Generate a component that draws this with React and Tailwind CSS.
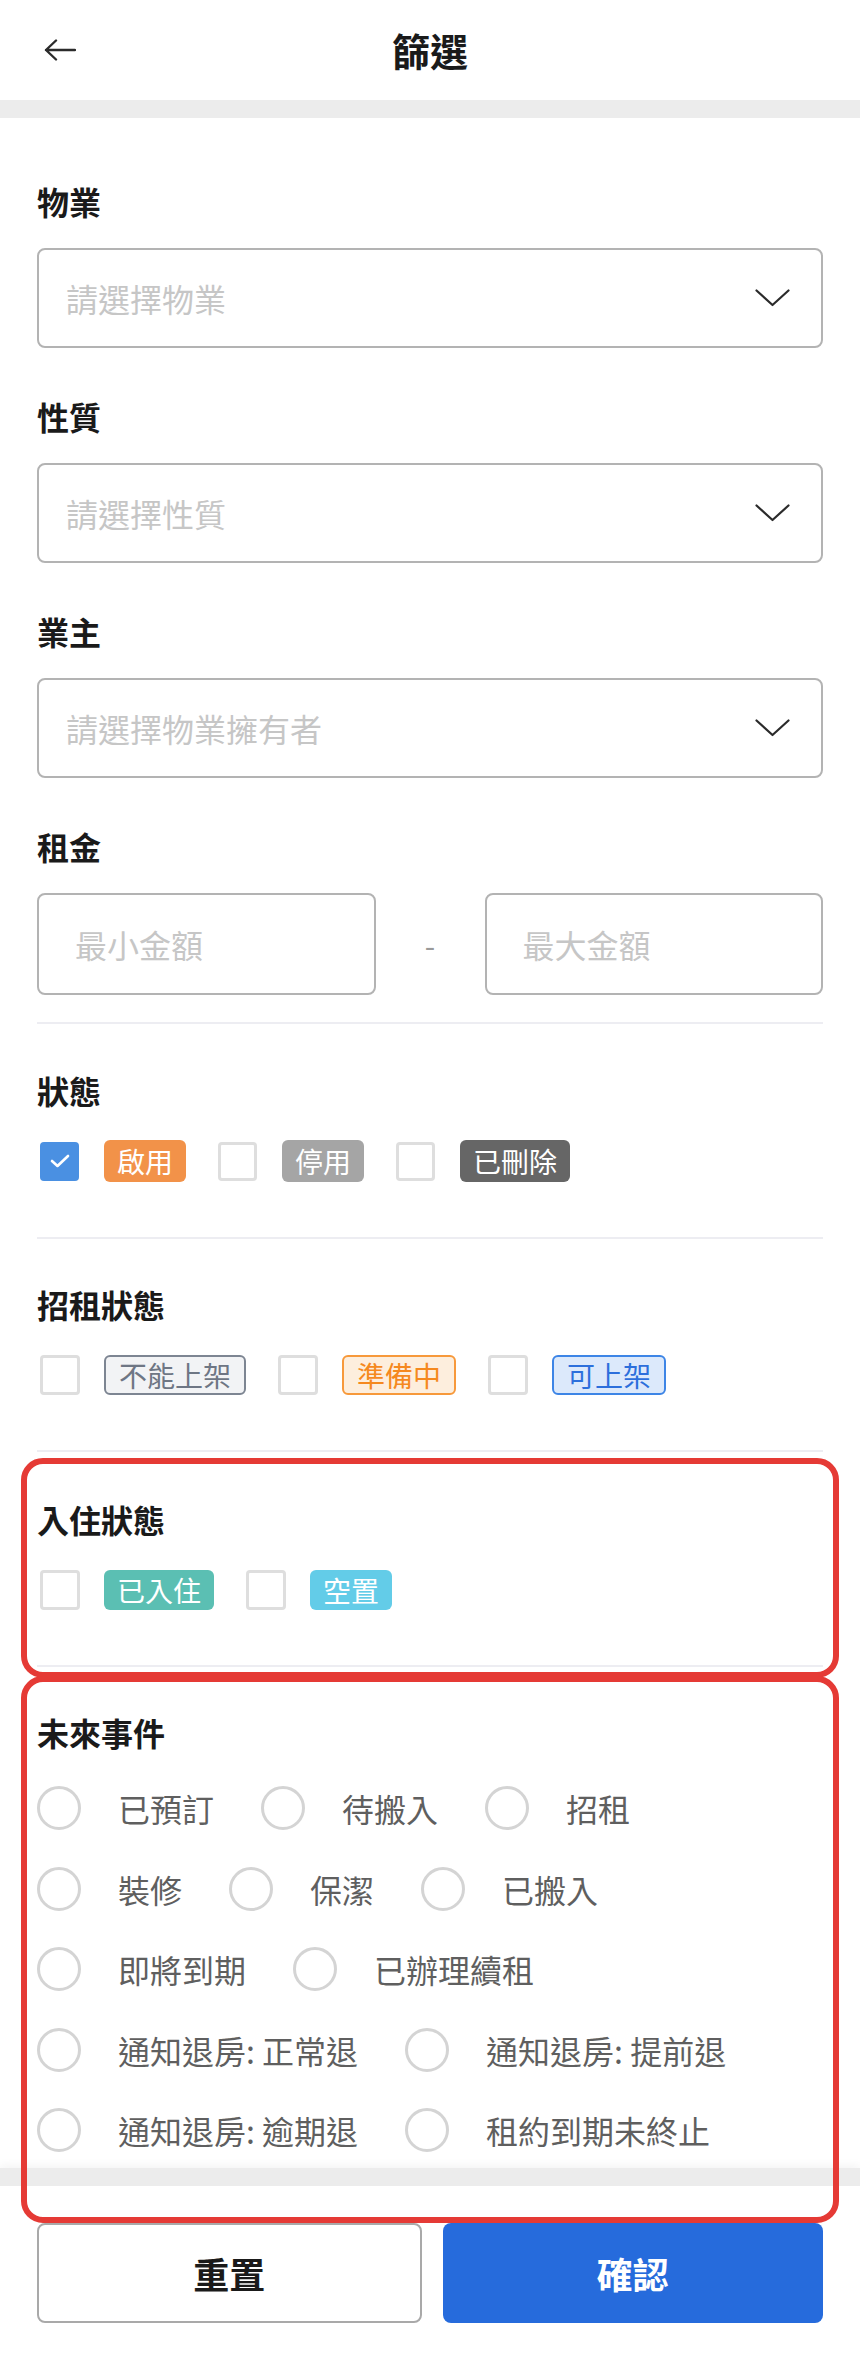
import React from "react";

const selects = [
  { label: "物業", placeholder: "請選擇物業" },
  { label: "性質", placeholder: "請選擇性質" },
  { label: "業主", placeholder: "請選擇物業擁有者" },
];

const events = [
  "已預訂",
  "待搬入",
  "招租",
  "裝修",
  "保潔",
  "已搬入",
  "即將到期",
  "已辦理續租",
  "通知退房: 正常退",
  "通知退房: 提前退",
  "通知退房: 逾期退",
  "租約到期未終止",
];

function Label({ children }) {
  return (
    <div className="text-[32px] leading-[45px] font-bold text-[#1a1a1a]">
      {children}
    </div>
  );
}

function Chevron() {
  return (
    <svg width="35" height="18" viewBox="0 0 35 18" fill="none">
      <path d="M1.5 1.5 L17.5 16 L33.5 1.5" stroke="#2b2b2b" strokeWidth="2.2" strokeLinecap="round" strokeLinejoin="round" />
    </svg>
  );
}

function SelectBox({ placeholder }) {
  return (
    <div className="mt-[24px] h-[100px] rounded-[8px] border-2 border-[#b3b3b3] flex items-center justify-between pl-[27px] pr-[31px]">
      <span className="text-[32px] leading-none text-[#c6c6c6]">{placeholder}</span>
      <Chevron />
    </div>
  );
}

function CheckBox({ checked, size }) {
  if (checked) {
    return (
      <span className={`${size} ml-[3px] rounded-[4px] bg-[#4a90e2] flex items-center justify-center shrink-0`}>
        <svg width="20" height="14" viewBox="0 0 20 14" fill="none">
          <path d="M2 7 L7.5 12 L18 2" stroke="#ffffff" strokeWidth="2.6" strokeLinecap="round" strokeLinejoin="round" />
        </svg>
      </span>
    );
  }
  return <span className={`${size} ml-[3px] rounded-[4px] border-[3px] border-[#dedede] bg-white shrink-0`} />;
}

function CheckItem({ checked, size, gap, tag, children }) {
  return (
    <div className="flex items-center mr-[29px]">
      <CheckBox checked={checked} size={size} />
      <span className={`${gap} ${tag} px-[13px] rounded-[6px] text-[28px] leading-none flex items-center`}>
        {children}
      </span>
    </div>
  );
}

function Divider() {
  return <div className="h-[2px] bg-[#ededf2]" />;
}

function Radio({ children }) {
  return (
    <div className="flex items-center h-[44px] mr-[47px]">
      <span className="w-[44px] h-[44px] rounded-full border-[3px] border-[#d4d4d4] shrink-0" />
      <span className="ml-[37px] text-[32px] leading-[44px] text-[#5f5f5f] whitespace-nowrap">{children}</span>
    </div>
  );
}

export default function App() {
  return (
    <div className="relative w-[860px] h-[2360px] bg-white flex flex-col overflow-hidden font-['Noto_Sans_CJK_TC','Noto_Sans',sans-serif]">
      {/* top bar */}
      <header className="h-[100px] grid grid-cols-[1fr_auto_1fr] items-center shrink-0">
        <div className="pl-[44px] flex items-center">
          <svg width="32" height="22" viewBox="0 0 32 22" fill="none">
            <path d="M31 11 H2 M12 1.5 L2 11 L12 20.5" stroke="#2b2b2b" strokeWidth="2.4" strokeLinecap="round" strokeLinejoin="round" />
          </svg>
        </div>
        <h1 className="text-[38px] leading-none font-bold text-[#1a1a1a]">篩選</h1>
        <div />
      </header>
      <div className="h-[18px] bg-[#ececec] shrink-0" />

      {/* filter form */}
      <main className="flex-1 overflow-hidden px-[37px]">
        <section className="pt-[61px]">
          {selects.map((s, i) => (
            <div key={s.label} className={i === 0 ? "" : "mt-[46px]"}>
              <Label>{s.label}</Label>
              <SelectBox placeholder={s.placeholder} />
            </div>
          ))}
          <div className="mt-[46px]">
            <Label>租金</Label>
            <div className="mt-[24px] flex items-center">
              <div className="flex-1 h-[102px] rounded-[8px] border-2 border-[#b3b3b3] flex items-center pl-[36px]">
                <span className="text-[32px] leading-none text-[#c6c6c6]">最小金額</span>
              </div>
              <div className="w-[109px] text-center text-[30px] leading-none text-[#9a9a9a]">-</div>
              <div className="flex-1 h-[102px] rounded-[8px] border-2 border-[#b3b3b3] flex items-center pl-[36px]">
                <span className="text-[32px] leading-none text-[#c6c6c6]">最大金額</span>
              </div>
            </div>
          </div>
          <div className="mt-[27px]">
            <Divider />
          </div>
        </section>

        <section className="pt-[44px] pb-[55px]">
          <Label>狀態</Label>
          <div className="mt-[27px] flex items-center h-[42px]">
            <CheckItem checked size="w-[39px] h-[39px]" gap="ml-[25px]" tag="h-[42px] bg-[#f29249] text-white">啟用</CheckItem>
            <CheckItem size="w-[39px] h-[39px]" gap="ml-[25px]" tag="h-[42px] bg-[#a5a5a5] text-white">停用</CheckItem>
            <CheckItem size="w-[39px] h-[39px]" gap="ml-[25px]" tag="h-[42px] bg-[#666666] text-white">已刪除</CheckItem>
          </div>
        </section>
        <Divider />

        <section className="pt-[43px] pb-[55px]">
          <Label>招租狀態</Label>
          <div className="mt-[28px] flex items-center h-[40px]">
            <CheckItem size="w-[40px] h-[40px]" gap="ml-[24px]" tag="h-[40px] border-2 border-[#7d8592] bg-[#f2f3f5] text-[#6e7684]">不能上架</CheckItem>
            <CheckItem size="w-[40px] h-[40px]" gap="ml-[24px]" tag="h-[40px] border-2 border-[#f7993b] bg-[#fdeedd] text-[#f5891f]">準備中</CheckItem>
            <CheckItem size="w-[40px] h-[40px]" gap="ml-[24px]" tag="h-[40px] border-2 border-[#3d85e6] bg-[#dce9fb] text-[#2c6fdc]">可上架</CheckItem>
          </div>
        </section>
        <Divider />

        <section className="pt-[45px] pb-[55px]">
          <Label>入住狀態</Label>
          <div className="mt-[28px] flex items-center h-[40px]">
            <CheckItem size="w-[40px] h-[40px]" gap="ml-[24px]" tag="h-[40px] bg-[#5bbfb3] text-white">已入住</CheckItem>
            <CheckItem size="w-[40px] h-[40px]" gap="ml-[24px]" tag="h-[40px] bg-[#63cce8] text-white">空置</CheckItem>
          </div>
        </section>
        <Divider />

        <section className="pt-[43px]">
          <Label>未來事件</Label>
          <div className="mt-[31px] flex flex-wrap gap-y-[36.5px]">
            {events.map((e) => (
              <Radio key={e}>{e}</Radio>
            ))}
          </div>
        </section>
      </main>

      {/* action bar */}
      <footer className="relative shrink-0 bg-white shadow-[0_-4px_8px_rgba(0,0,0,0.04)]">
        <div className="h-[18px] bg-[#ececec]" />
        <div className="px-[37px] py-[37px] flex gap-[21px]">
          <button className="flex-1 h-[100px] rounded-[8px] border-2 border-[#a9a9a9] bg-white text-[36px] font-bold text-[#1a1a1a]">
            重置
          </button>
          <button className="flex-1 h-[100px] rounded-[8px] bg-[#266bdc] text-[36px] font-bold text-white">
            確認
          </button>
        </div>
      </footer>

      {/* highlight frames */}
      <div className="absolute left-[21px] top-[1458px] w-[818px] h-[220px] rounded-[22px] border-[6px] border-[#e53a35] pointer-events-none" />
      <div className="absolute left-[21px] top-[1676px] w-[818px] h-[547px] rounded-[22px] border-[6px] border-[#e53a35] pointer-events-none" />
    </div>
  );
}
